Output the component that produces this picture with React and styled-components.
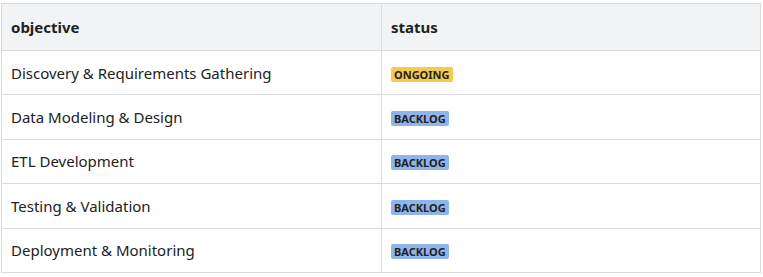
import React from 'react';
import styled, { createGlobalStyle } from 'styled-components';

const GlobalStyle = createGlobalStyle`
  body {
    margin: 0;
    padding: 3px 0 0 1px;
    background: #fff;
    font-family: 'Noto Sans', 'Open Sans', sans-serif;
    color: #222;
  }
`;

const Table = styled.table`
  width: 760px;
  border-collapse: collapse;
  font-size: 15px;
`;

const HeadCell = styled.th`
  height: 46px;
  padding: 0 9px;
  text-align: left;
  font-weight: 700;
  background: #f2f3f4;
  border: 1px solid #dcdcdc;
  width: ${p => p.$w || 'auto'};
`;

const Cell = styled.td`
  height: 44.4px;
  padding: 0 9px;
  border: 1px solid #dcdcdc;
  box-sizing: border-box;
`;

const Badge = styled.span`
  display: inline-block;
  padding: 1px 3px;
  font-size: 11px;
  font-weight: 700;
  line-height: 13px;
  color: #222;
  background: ${p => (p.$tone === 'ongoing' ? '#f7c94f' : '#8fb4ea')};
  border-radius: 2px;
`;

const rows = [
  { objective: 'Discovery & Requirements Gathering', status: 'ONGOING' },
  { objective: 'Data Modeling & Design', status: 'BACKLOG' },
  { objective: 'ETL Development', status: 'BACKLOG' },
  { objective: 'Testing & Validation', status: 'BACKLOG' },
  { objective: 'Deployment & Monitoring', status: 'BACKLOG' },
];

const App = () => {
  return (
    <>
      <GlobalStyle />
      <Table>
        <thead>
          <tr>
            <HeadCell $w="361px">objective</HeadCell>
            <HeadCell>status</HeadCell>
          </tr>
        </thead>
        <tbody>
          {rows.map(r => (
            <tr key={r.objective}>
              <Cell>{r.objective}</Cell>
              <Cell>
                <Badge $tone={r.status.toLowerCase()}>{r.status}</Badge>
              </Cell>
            </tr>
          ))}
        </tbody>
      </Table>
    </>
  );
};

export default App;
